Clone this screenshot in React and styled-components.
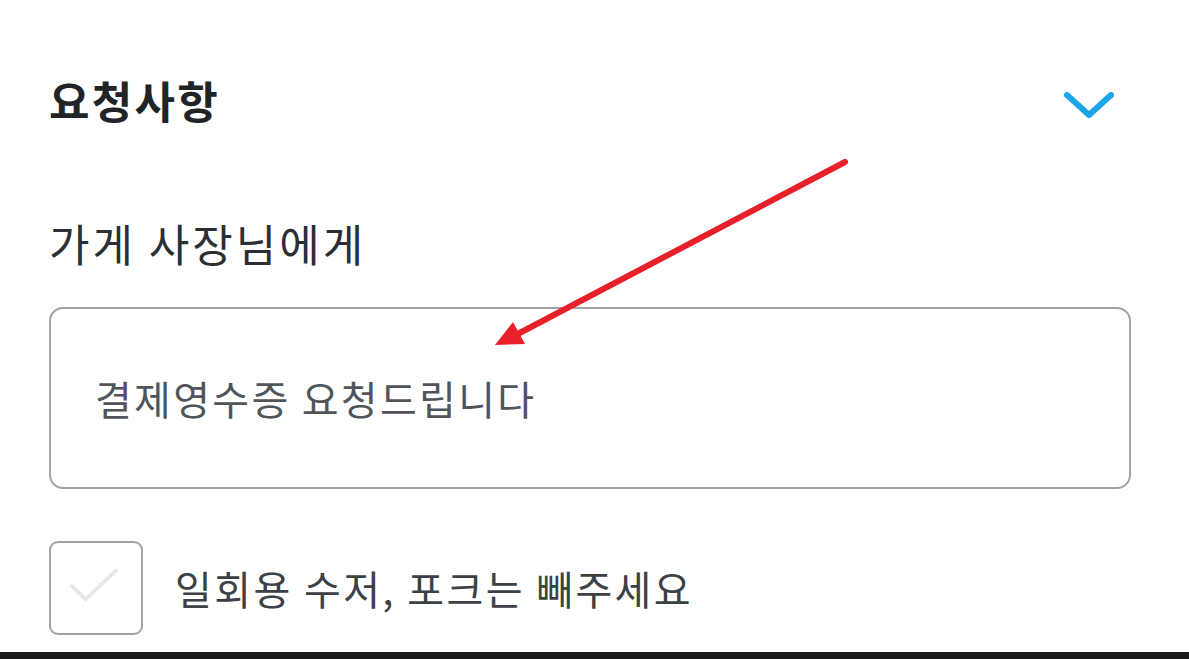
import styled, { createGlobalStyle } from "styled-components";

const GlobalStyle = createGlobalStyle`
	html, body {
		margin: 0;
		padding: 0;
		background: #ffffff;
	}
	body {
		font-family: "Noto Sans CJK KR", "Noto Sans", sans-serif;
	}
`;

const App = () => {
	return (
		<>
			<GlobalStyle />
			<Page>
				<Content>
					<TitleRow>
						<Title>요청사항</Title>
						<Chevron viewBox="0 0 50 26" aria-hidden="true">
							<polyline points="3,3 25,23 47,3" />
						</Chevron>
					</TitleRow>
					<Label>가게 사장님에게</Label>
					<RequestBox>결제영수증 요청드립니다</RequestBox>
					<CheckRow>
						<CheckBox>
							<svg viewBox="0 0 94 94" aria-hidden="true">
								<polyline points="24,47 38,61 70,31" />
							</svg>
						</CheckBox>
						<CheckLabel>일회용 수저, 포크는 빼주세요</CheckLabel>
					</CheckRow>
				</Content>
				<BottomBar />
				<Annotation viewBox="0 0 1189 659" aria-hidden="true">
					<line x1="845" y1="162" x2="512" y2="337" />
					<polygon points="495,345 513,322 525,344" />
				</Annotation>
			</Page>
		</>
	);
};

const Page = styled.div`
	position: relative;
	width: 1189px;
	height: 659px;
	display: flex;
	flex-direction: column;
	overflow: hidden;
`;

const Content = styled.div`
	flex: 1;
	display: flex;
	flex-direction: column;
	padding: 75px 58px 0 49px;
`;

const TitleRow = styled.div`
	display: flex;
	align-items: center;
	justify-content: space-between;
	height: 50px;
	padding-right: 17px;
`;

const Title = styled.h2`
	margin: 0;
	font-size: 44px;
	line-height: 50px;
	font-weight: 700;
	letter-spacing: 2.3px;
	color: #212427;
`;

const Chevron = styled.svg`
	width: 50px;
	height: 26px;
	margin-top: 10px;

	polyline {
		fill: none;
		stroke: #1ea5e9;
		stroke-width: 6;
		stroke-linecap: round;
		stroke-linejoin: round;
	}
`;

const Label = styled.p`
	margin: 93px 0 0;
	font-size: 44px;
	line-height: 50px;
	letter-spacing: 3px;
	color: #2b2f33;
`;

const RequestBox = styled.div`
	margin-top: 39px;
	height: 182px;
	box-sizing: border-box;
	border: 2.5px solid #9fa4a9;
	border-radius: 14px;
	display: flex;
	align-items: center;
	padding-left: 44px;
	font-size: 40px;
	letter-spacing: 2.3px;
	color: #50555a;
`;

const CheckRow = styled.div`
	margin-top: 52px;
	display: flex;
	align-items: center;
	gap: 32px;
`;

const CheckBox = styled.div`
	width: 94px;
	height: 94px;
	box-sizing: border-box;
	border: 2.5px solid #9fa4a9;
	border-radius: 9px;

	svg {
		display: block;
		width: 100%;
		height: 100%;
		margin: -2.5px;
	}

	polyline {
		fill: none;
		stroke: #e6e8ea;
		stroke-width: 4;
		stroke-linecap: round;
		stroke-linejoin: round;
	}
`;

const CheckLabel = styled.span`
	font-size: 40px;
	letter-spacing: 2.4px;
	color: #3c4146;
`;

const BottomBar = styled.div`
	height: 7px;
	background: #1b1b1b;
`;

const Annotation = styled.svg`
	position: absolute;
	inset: 0;
	width: 100%;
	height: 100%;
	pointer-events: none;

	line {
		stroke: #e8202a;
		stroke-width: 6;
		stroke-linecap: round;
	}

	polygon {
		fill: #e8202a;
	}
`;

export default App;
